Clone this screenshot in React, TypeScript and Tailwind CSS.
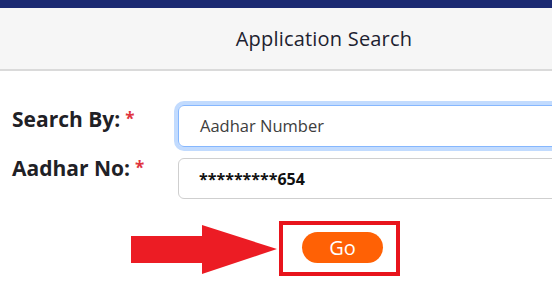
import React from 'react'

const font = { fontFamily: '"Open Sans", "Liberation Sans", sans-serif' }

function Arrow() {
  return (
    <svg width="148" height="52" viewBox="0 0 148 52" className="absolute left-[130px] top-[224px]">
      <path d="M1 12 H72 V1 L147 25 L72 50 V39 H1 Z" fill="#ec1c24" />
    </svg>
  )
}

function Required() {
  return <span className="relative top-[3px] ml-[5px] align-top text-[17px] leading-none text-[#e0343e]">*</span>
}

export default function App() {
  return (
    <div className="relative w-[552px] h-[281px] overflow-hidden bg-white" style={font}>
      <div className="w-[648px]">
        <div className="h-2 bg-[#1b2a72]" />
        <div className="h-[63px] bg-[#f6f6f6] border-b-2 border-[#dadada] flex items-center justify-center">
          <h1 className="text-[20px] text-[#1d2230] tracking-[0.2px]">Application Search</h1>
        </div>

        <div className="pt-[34px] pl-[12px] flex flex-col gap-[11px]">
          <div className="flex items-start">
            <label className="w-[166px] mt-[2px] font-bold text-[21px] leading-6 text-[#1f2126]">
              Search By:<Required />
            </label>
            <div className="flex-1 h-[42px] rounded-md border border-[#86b7fe] ring-4 ring-[#c2dbfe] flex items-center pl-[21px] text-[16.5px] text-[#3d3d3d]">
              Aadhar Number
            </div>
          </div>
          <div className="flex items-start">
            <label className="w-[166px] -mt-[2px] font-bold text-[21px] leading-6 text-[#1f2126]">
              Aadhar No:<Required />
            </label>
            <div className="flex-1 h-[41px] rounded-md border border-[#cfcfcf] flex items-center pl-[20px] text-[16px] font-bold text-[#111]">
              *********654
            </div>
          </div>
        </div>

        <div className="pt-[33px] pl-[302px]">
          <button className="w-[81px] h-[31px] rounded-full bg-[#ff6105] text-white text-[20px] leading-none">Go</button>
        </div>
      </div>

      <div className="absolute left-[279px] top-[221px] w-[121px] h-[55px] border-4 border-[#e8141c]" />
      <Arrow />
    </div>
  )
}
